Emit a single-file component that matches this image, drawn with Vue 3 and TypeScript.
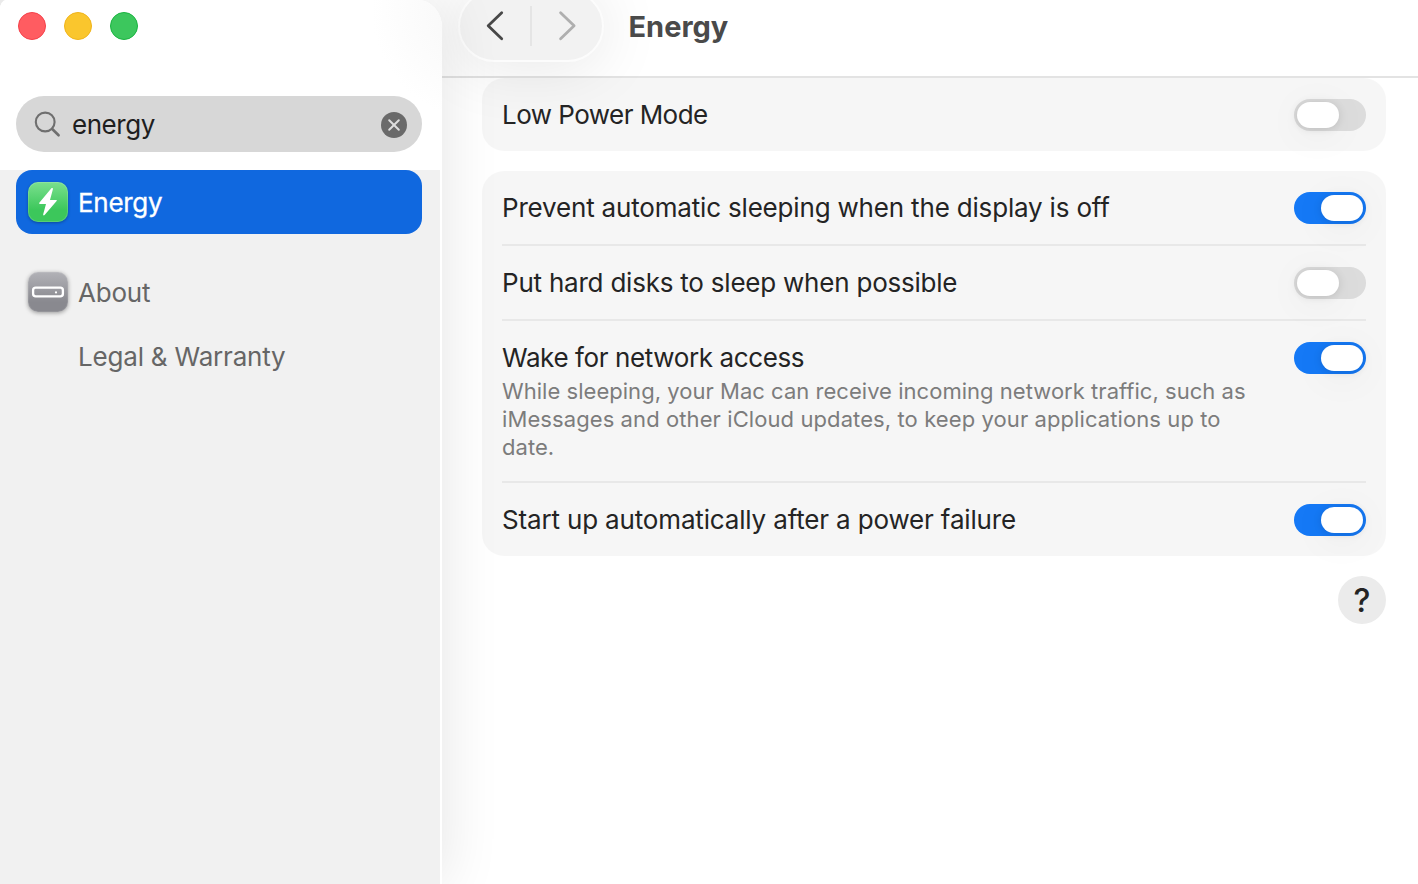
<script setup lang="ts">
import { ref } from 'vue'

interface Setting {
  id: string
  label: string
  on: boolean
  lines?: string[]
}

const query = ref('energy')

const groups = ref<Setting[][]>([
  [{ id: 'low-power', label: 'Low Power Mode', on: false }],
  [
    { id: 'prevent', label: 'Prevent automatic sleeping when the display is off', on: true },
    { id: 'disks', label: 'Put hard disks to sleep when possible', on: false },
    {
      id: 'wake',
      label: 'Wake for network access',
      on: true,
      lines: [
        'While sleeping, your Mac can receive incoming network traffic, such as',
        'iMessages and other iCloud updates, to keep your applications up to',
        'date.',
      ],
    },
    { id: 'startup', label: 'Start up automatically after a power failure', on: true },
  ],
])
</script>

<template>
  <div class="window">
    <aside class="sidebar">
      <div class="sidebar-top">
        <div class="lights">
          <span class="light red"></span>
          <span class="light yellow"></span>
          <span class="light green"></span>
        </div>
        <div class="search">
          <svg class="lens" width="30" height="30" viewBox="0 0 30 30">
            <circle cx="12.2" cy="13" r="9.4" />
            <path d="M19.2 20L25.6 26.3" />
          </svg>
          <span class="query">{{ query }}</span>
          <svg class="clear" width="26" height="26" viewBox="0 0 26 26" @click="query = ''">
            <circle cx="13" cy="13" r="13" />
            <path d="M8.2 8.2L17.8 17.8M17.8 8.2L8.2 17.8" />
          </svg>
        </div>
      </div>
      <nav class="results">
        <div class="item selected">
          <span class="app-icon energy-icon">
            <svg width="40" height="40" viewBox="0 0 40 40">
              <path
                d="M23.4 6.3L11.3 20.7C10.9 21.3 11.2 21.9 11.9 21.9H18L15.2 32.3C14.9 33.4 15.9 33.8 16.6 33L28.6 19.1C29.1 18.5 28.8 17.9 28.1 17.9H22L24.9 7.2C25.2 6.1 24.1 5.5 23.4 6.3Z"
              />
            </svg>
          </span>
          <span class="t-energy">Energy</span>
        </div>
        <div class="item about">
          <span class="app-icon about-icon">
            <svg width="40" height="40" viewBox="0 0 40 40">
              <rect x="5.1" y="15.6" width="29.8" height="8.8" rx="2.6" />
              <circle cx="28" cy="20.4" r="1.1" />
            </svg>
          </span>
          <span class="t-about">About</span>
        </div>
        <div class="item sub"><span class="t-legal">Legal &amp; Warranty</span></div>
      </nav>
    </aside>

    <main class="content">
      <header class="toolbar">
        <div class="pill">
          <svg class="back" width="71" height="72" viewBox="0 0 71 72"><path d="M41.7 22.8L28.2 35.8L41.7 48.8" /></svg>
          <span class="split"></span>
          <svg class="forward" width="71" height="72" viewBox="0 0 71 72"><path d="M29.6 22.8L43.1 35.8L29.6 48.8" /></svg>
        </div>
        <h1 class="title">Energy</h1>
      </header>
      <div class="body">
        <section v-for="(group, i) in groups" :key="i" class="card">
          <div v-for="s in group" :key="s.id" class="row">
            <div class="text">
              <div class="label"><span :class="'t-' + s.id">{{ s.label }}</span></div>
              <div v-if="s.lines" class="desc">
                <div v-for="line in s.lines" :key="line">{{ line }}</div>
              </div>
            </div>
            <button class="toggle" :class="{ on: s.on }" role="switch" :aria-checked="s.on" @click="s.on = !s.on">
              <span class="thumb"></span>
            </button>
          </div>
        </section>
        <button class="help">?</button>
      </div>
    </main>
  </div>
</template>

<style>
body {
  margin: 0;
  overflow: hidden;
}
</style>

<style scoped>
.window {
  display: flex;
  width: 1418px;
  height: 884px;
  overflow: hidden;
  background: #f1f1f1;
  font-family: Inter, 'Liberation Sans', sans-serif;
  font-size: 26px;
  color: #242424;
}
.sidebar {
  position: relative;
  z-index: 1;
  flex: none;
  box-sizing: border-box;
  width: 442px;
  height: 884px;
  display: flex;
  flex-direction: column;
  background: #fff;
  border-radius: 6px 24px 0 0 / 9px 27px 0 0;
  box-shadow: 0 0 60px rgba(0, 0, 0, 0.11);
  white-space: nowrap;
}
.sidebar-top {
  box-sizing: border-box;
  height: 170px;
  padding: 12px 20px 0 16px;
  border-radius: inherit;
  background: radial-gradient(circle at 482px 10px, #f6f6f6 0, #fbfbfb 60px, #fff 110px);
}
.lights {
  display: flex;
  gap: 18px;
  padding-left: 2px;
}
.light {
  box-sizing: border-box;
  width: 28px;
  height: 28px;
  border-radius: 50%;
  border: 1px solid;
}
.red {
  background: #ff5c61;
  border-color: #f5404a;
}
.yellow {
  background: #fac62d;
  border-color: #f0b41a;
}
.green {
  background: #3cc75d;
  border-color: #19b440;
}
.search {
  display: flex;
  align-items: center;
  box-sizing: border-box;
  height: 56px;
  margin-top: 56px;
  padding: 2px 15px 0 17px;
  border-radius: 28px;
  background: #d7d7d7;
  color: #1e1e1e;
}
.lens {
  margin-top: -3px;
  fill: none;
  stroke: #6f6f6f;
  stroke-width: 2.1;
  stroke-linecap: round;
}
.lens path {
  stroke-width: 2.6;
}
.query {
  flex: 1;
  margin: -2px 0 0 9px;
  letter-spacing: -0.45px;
}
.clear {
  fill: #6a6a6a;
}
.clear path {
  stroke: #dedede;
  stroke-width: 2;
  stroke-linecap: round;
}
.results {
  flex: 1;
  margin-right: 2px;
  padding: 0 18px 0 16px;
  background: #f1f1f1;
}
.item {
  display: flex;
  align-items: center;
  gap: 10px;
  box-sizing: border-box;
  height: 64px;
  padding-left: 12px;
  color: #666;
}
.selected {
  border-radius: 16px;
  background: #1068df;
  color: #fff;
}
.about {
  margin-top: 26px;
}
.sub {
  padding-left: 62px;
}
.t-energy {
  letter-spacing: -0.3px;
  -webkit-text-stroke: 0.3px;
}
.t-about {
  letter-spacing: -0.2px;
}
.t-legal {
  letter-spacing: -0.19px;
}
.t-low-power {
  letter-spacing: -0.54px;
}
.t-prevent {
  letter-spacing: -0.18px;
}
.t-disks {
  letter-spacing: -0.22px;
}
.t-wake {
  letter-spacing: -0.39px;
}
.t-startup {
  letter-spacing: -0.16px;
}
.app-icon {
  width: 40px;
  height: 40px;
  border-radius: 10px;
}
.app-icon svg {
  display: block;
}
.energy-icon {
  background: linear-gradient(#7be08e, #3cc75b 70%);
  box-shadow: 0 1px 3px rgba(0, 0, 0, 0.3), inset 0 0 0 1px rgba(255, 255, 255, 0.14);
}
.energy-icon path {
  fill: #fff;
}
.about-icon {
  background: linear-gradient(#b2b2b7, #89898f 75%);
  box-shadow: 0 1px 4px rgba(0, 0, 0, 0.36), inset 0 0 0 1px rgba(255, 255, 255, 0.1);
}
.about-icon rect {
  fill: none;
  stroke: #fff;
  stroke-width: 2.3;
}
.about-icon circle {
  fill: #fff;
}
.content {
  flex: 1;
  min-width: 0;
  background: #fff;
  margin-left: -26px;
  padding-left: 26px;
}
.toolbar {
  display: flex;
  box-sizing: border-box;
  height: 78px;
  padding-left: 16px;
  border-bottom: 2px solid #e3e3e3;
}
.pill {
  display: flex;
  align-items: center;
  box-sizing: border-box;
  width: 146px;
  height: 72px;
  margin-top: -10px;
  border: 2px solid #fcfcfc;
  border-radius: 36px;
  background: #f2f2f2;
  box-shadow: 0 4px 64px rgba(0, 0, 0, 0.1);
}
.pill svg {
  flex: none;
  fill: none;
  stroke-width: 2.8;
  stroke-linecap: round;
  stroke-linejoin: round;
}
.back {
  stroke: #484848;
}
.forward {
  stroke: #afafaf;
}
.split {
  flex: none;
  width: 2px;
  height: 40px;
  margin: 0 -1px;
  background: #e5e5e5;
}
.title {
  margin: 0 0 0 24.5px;
  line-height: 54px;
  font-size: 29px;
  font-weight: 700;
  color: #4a4a4a;
}
.body {
  display: flex;
  flex-direction: column;
  gap: 20px;
  padding: 0 32px 0 40px;
}
.card {
  padding: 0 20px;
  border-radius: 22px;
  background: rgba(0, 0, 0, 0.035);
}
.card:first-child {
  margin-top: 0;
}
.row {
  display: flex;
  justify-content: space-between;
  align-items: flex-start;
  padding: 21px 0 20px;
}
.row + .row {
  border-top: 2px solid #e8e8e8;
}
.label {
  height: 32px;
  line-height: 32px;
  white-space: nowrap;
}
.desc {
  margin: 3px 0 0;
  font-size: 22px;
  line-height: 28px;
  color: #7c7c7c;
  white-space: nowrap;
  letter-spacing: 0.03px;
}
.desc div:nth-child(2) {
  letter-spacing: 0.09px;
}
.toggle {
  flex: none;
  width: 72px;
  height: 32px;
  padding: 3px;
  border: 0;
  border-radius: 16px;
  background: #dcdcdc;
}
.toggle.on {
  background: #1579f6;
}
.thumb {
  display: block;
  width: 42px;
  height: 26px;
  border-radius: 13px;
  background: #fff;
  box-shadow: 0 1px 8px rgba(0, 0, 0, 0.12), 0 6px 40px rgba(0, 0, 0, 0.06);
}
.on .thumb {
  margin-left: 24px;
}
.help {
  align-self: flex-end;
  width: 48px;
  height: 48px;
  padding: 0;
  border: 0;
  border-radius: 50%;
  background: #ebebeb;
  font: 500 32px/50px Inter, sans-serif;
  color: #242424;
}
</style>
